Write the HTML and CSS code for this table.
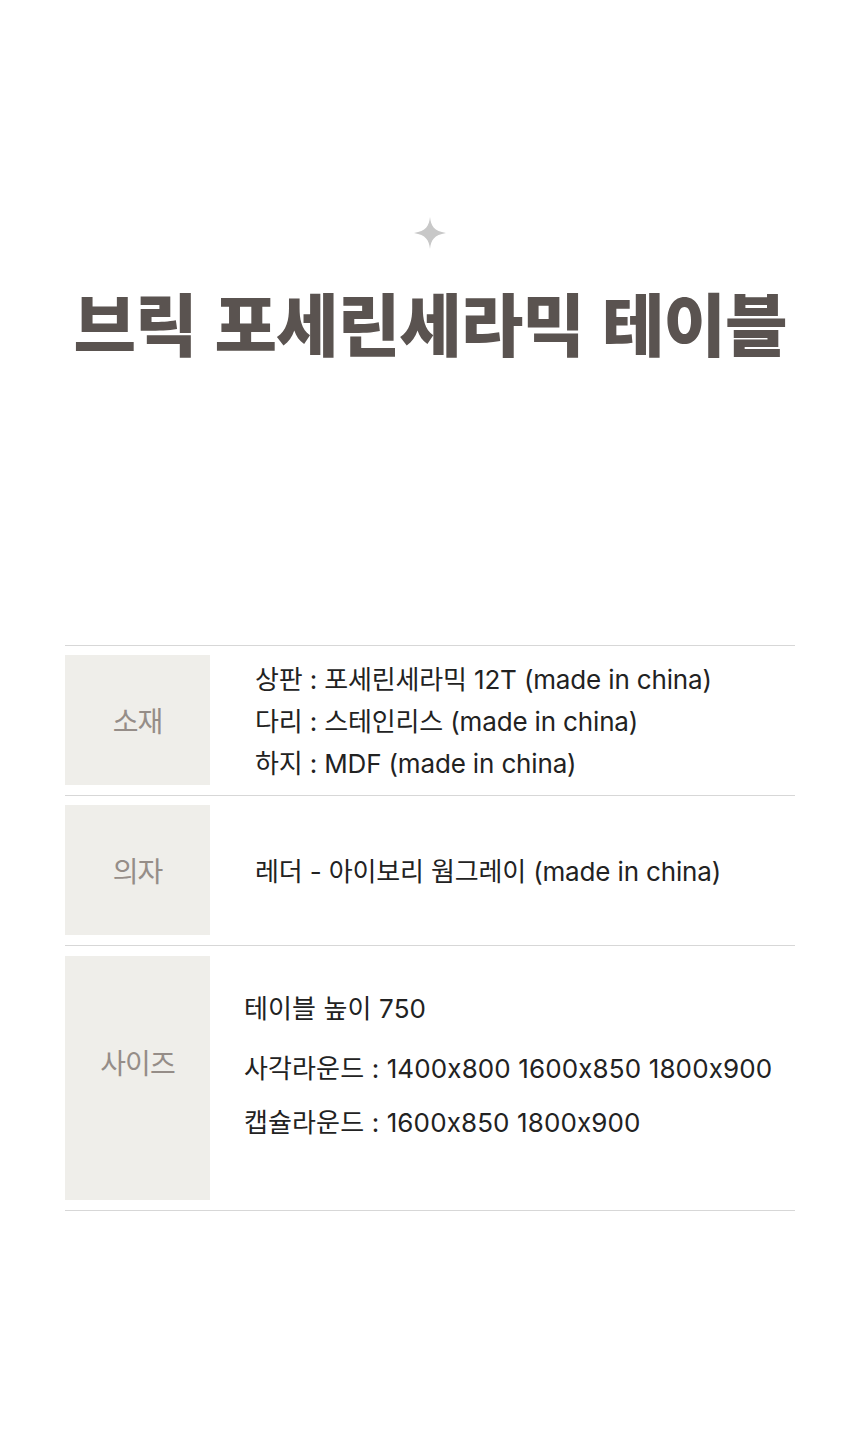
FILE: index.html
```html
<!DOCTYPE html>
<html lang="ko">
<head>
<meta charset="utf-8">
<link rel="stylesheet" href="styles.css">
</head>
<body>
<div class="page">
  <header class="hero">
    <svg class="sparkle" viewBox="0 0 32 32" width="32" height="32" aria-hidden="true">
      <path d="M16 0 C17 9 20 14 32 16 C20 18 17 23 16 32 C15 23 12 18 0 16 C12 14 15 9 16 0 Z" fill="#c8c8c8"/>
    </svg>
    <h1 class="title">브릭 포세린세라믹 테이블</h1>
  </header>

  <section class="spec">
    <div class="row">
      <div class="label">소재</div>
      <div class="content">
        <p class="line">상판 : 포세린세라믹 12T (made in china)</p>
        <p class="line">다리 : 스테인리스 (made in china)</p>
        <p class="line">하지 : MDF (made in china)</p>
      </div>
    </div>
    <div class="row">
      <div class="label">의자</div>
      <div class="content">
        <p class="line">레더 - 아이보리 웜그레이 (made in china)</p>
      </div>
    </div>
    <div class="row row-size">
      <div class="label label-size">사이즈</div>
      <div class="content content-size">
        <p class="line">테이블 높이 750</p>
        <p class="line l2">사각라운드 : 1400x800 1600x850 1800x900</p>
        <p class="line l3">캡슐라운드 : 1600x850 1800x900</p>
      </div>
    </div>
  </section>
</div>
</body>
</html>
```

FILE: styles.css
```css
* { box-sizing: border-box; }
html, body { margin: 0; padding: 0; background: #fff; }
body {
  font-family: "Inter", "Noto Sans CJK KR", sans-serif;
  font-feature-settings: "calt" 0;
  color: #222;
}
.page { width: 860px; height: 1429px; }
.hero {
  padding-top: 217px;
  display: flex;
  flex-direction: column;
  align-items: center;
}
.sparkle { display: block; }
.title {
  margin: 28px 0 0;
  font-family: "Noto Sans CJK KR", sans-serif;
  font-weight: 900;
  font-size: 68px;
  line-height: 90px;
  letter-spacing: -1px;
  color: #5a5350;
  white-space: nowrap;
}
.spec {
  margin: 278px 65px 0;
  border-top: 1px solid #d7d7d7;
}
.row {
  display: flex;
  padding: 9px 0 10px;
  border-bottom: 1px solid #d7d7d7;
}
.label {
  width: 145px;
  flex: none;
  height: 130px;
  background: #efeeea;
  display: flex;
  align-items: center;
  justify-content: center;
  font-family: "Noto Sans CJK KR", sans-serif;
  font-weight: 400;
  font-size: 28px;
  color: #958d88;
  letter-spacing: -1px;
}
.content {
  padding-left: 45px;
  padding-top: 4px;
  display: flex;
  flex-direction: column;
  justify-content: center;
}
.line {
  margin: 0;
  font-size: 26px;
  line-height: 42px;
  letter-spacing: -0.15px;
  white-space: nowrap;
}
.row-size { padding: 10px 0 10px; }
.label-size { height: 244px; padding-bottom: 32px; }
.content-size {
  padding-left: 34px;
  justify-content: flex-start;
  padding-top: 32px;
}
.content-size .line { letter-spacing: 0.12px; }
.content-size .l2 { margin-top: 18px; }
.content-size .l3 { margin-top: 12px; }
```
